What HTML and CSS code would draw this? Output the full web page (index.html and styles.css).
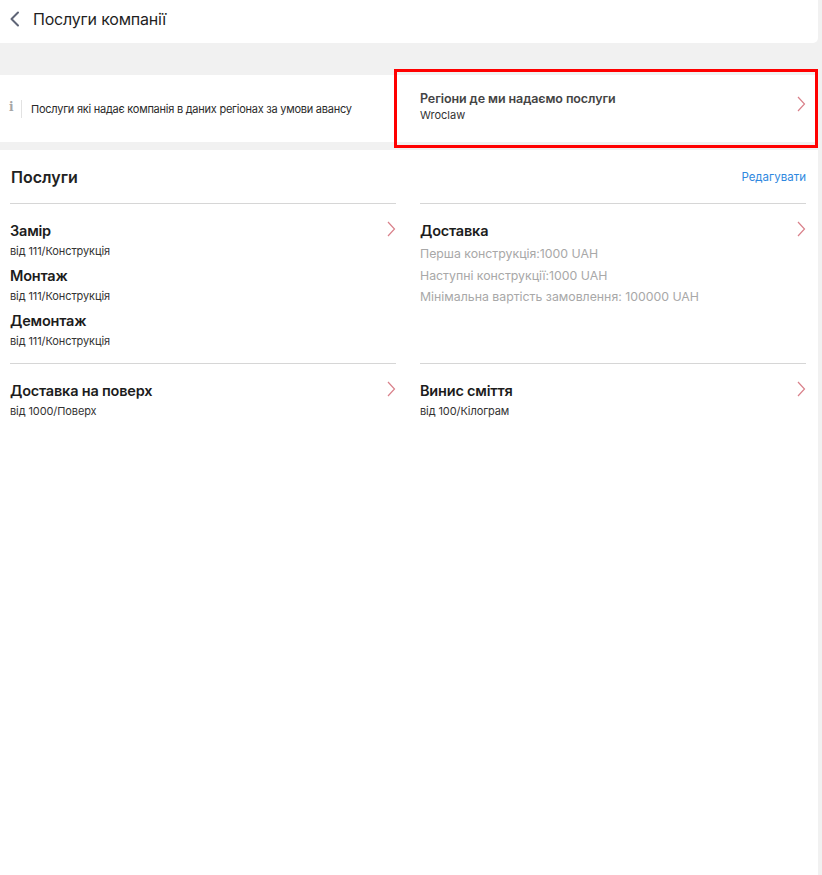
FILE: index.html
```html
<!DOCTYPE html>
<html lang="uk">
<head>
<meta charset="utf-8">
<title>Послуги компанії</title>
<link rel="stylesheet" href="styles.css">
</head>
<body>
<div class="page">
  <header class="topbar">
    <svg class="back" width="12" height="16" viewBox="0 0 12 16"><path d="M9 1.5 L2.5 8 L9 14.5" fill="none" stroke="#5f6577" stroke-width="2" stroke-linecap="round" stroke-linejoin="round"/></svg>
    <h1 class="title">Послуги компанії</h1>
  </header>

  <div class="gap"></div>

  <section class="inforow">
    <div class="info">
      <span class="info-i">i</span>
      <span class="info-sep"></span>
      <span class="info-text">Послуги які надає компанія в даних регіонах за умови авансу</span>
    </div>
    <div class="regions">
      <div class="regions-body">
        <div class="regions-title">Регіони де ми надаємо послуги</div>
        <div class="regions-sub">Wroclaw</div>
      </div>
      <svg class="chev" width="10" height="16" viewBox="0 0 10 16"><path d="M2 1 L8.5 8 L2 15" fill="none" stroke="#d9808a" stroke-width="1.2"/></svg>
    </div>
  </section>

  <main class="services">
    <div class="services-head">
      <h2 class="services-title">Послуги</h2>
      <a class="edit">Редагувати</a>
    </div>
    <div class="grid">
      <div class="cell">
        <div class="cell-body">
          <div class="item"><div class="item-title">Замір</div><div class="item-sub">від 111/Конструкція</div></div>
          <div class="item"><div class="item-title">Монтаж</div><div class="item-sub">від 111/Конструкція</div></div>
          <div class="item"><div class="item-title">Демонтаж</div><div class="item-sub">від 111/Конструкція</div></div>
        </div>
        <svg class="chev" width="10" height="16" viewBox="0 0 10 16"><path d="M2 1 L8.5 8 L2 15" fill="none" stroke="#d9808a" stroke-width="1.2"/></svg>
      </div>
      <div class="cell">
        <div class="cell-body">
          <div class="item-title">Доставка</div>
          <div class="gray-line first">Перша конструкція:1000 UAH</div>
          <div class="gray-line">Наступні конструкції:1000 UAH</div>
          <div class="gray-line">Мінімальна вартість замовлення: 100000 UAH</div>
        </div>
        <svg class="chev" width="10" height="16" viewBox="0 0 10 16"><path d="M2 1 L8.5 8 L2 15" fill="none" stroke="#d9808a" stroke-width="1.2"/></svg>
      </div>
      <div class="cell second">
        <div class="cell-body">
          <div class="item"><div class="item-title">Доставка на поверх</div><div class="item-sub">від 1000/Поверх</div></div>
        </div>
        <svg class="chev" width="10" height="16" viewBox="0 0 10 16"><path d="M2 1 L8.5 8 L2 15" fill="none" stroke="#d9808a" stroke-width="1.2"/></svg>
      </div>
      <div class="cell second">
        <div class="cell-body">
          <div class="item"><div class="item-title">Винис сміття</div><div class="item-sub">від 100/Кілограм</div></div>
        </div>
        <svg class="chev" width="10" height="16" viewBox="0 0 10 16"><path d="M2 1 L8.5 8 L2 15" fill="none" stroke="#d9808a" stroke-width="1.2"/></svg>
      </div>
    </div>
  </main>

  <div class="highlight"></div>
</div>
</body>
</html>
```
FILE: styles.css
```css
* { box-sizing: border-box; }
html, body { margin: 0; padding: 0; }
body {
  background: #f1f1f1;
  font-family: Inter, "Noto Sans", sans-serif;
  color: #222;
  height: 875px;
  overflow: hidden;
}
.page {
  position: relative;
  width: 818px;
  min-height: 875px;
  display: flex;
  flex-direction: column;
}
.topbar {
  height: 43px;
  background: #fff;
  border-bottom-right-radius: 5px;
  display: flex;
  align-items: center;
  padding-left: 9px;
  gap: 12px;
}
.back { margin-top: -5px; }
.title {
  margin: 0 0 5px 0;
  font-size: 16px;
  font-weight: 400;
  color: #1f1f1f;
  letter-spacing: -0.2px;
}
.gap { height: 32px; }
.inforow {
  height: 67px;
  background: #fff;
  display: flex;
  margin-bottom: 8px;
}
.info {
  width: 396px;
  display: flex;
  align-items: center;
  padding-left: 9px;
}
.info-i {
  font-family: "DejaVu Serif", serif;
  font-size: 12px;
  font-weight: 700;
  color: #a5a5a5;
  width: 7px;
  margin-top: -3px;
}
.info-sep {
  width: 1px;
  height: 18px;
  background: #e2e2e2;
  margin: 0 9px 0 5px;
}
.info-text {
  font-size: 11px;
  color: #2a2a2a;
  letter-spacing: -0.25px;
}
.regions {
  flex: 1;
  display: flex;
  align-items: center;
  padding: 0 12px 0 24px;
}
.regions-body { flex: 1; margin-top: -3px; }
.regions-title {
  font-size: 12.5px;
  font-weight: 600;
  color: #444;
  line-height: 16px;
  letter-spacing: -0.1px;
}
.regions-sub {
  font-size: 11px;
  color: #333;
  line-height: 15px;
  margin-top: 1px;
}
.regions .chev { margin-top: -9px; }
.services {
  flex: 1;
  background: #fff;
  padding: 0 12px 0 10px;
}
.services-head {
  height: 53px;
  display: flex;
  align-items: center;
  justify-content: space-between;
}
.services-title {
  margin: 0 0 0 1px;
  font-size: 16px;
  font-weight: 600;
  color: #222;
}
.edit {
  font-size: 11.5px;
  color: #2f88e0;
  cursor: pointer;
}
.grid {
  display: grid;
  grid-template-columns: 1fr 1fr;
  column-gap: 24px;
}
.cell {
  border-top: 1px solid #d6d6d6;
  display: flex;
  align-items: flex-start;
  padding-top: 17px;
  min-height: 160px;
}
.cell.second { min-height: 0; }
.cell-body { flex: 1; }
.cell .chev { margin-top: 0; flex: none; }
.item { margin-bottom: 7px; }
.item-title {
  font-size: 14.5px;
  font-weight: 600;
  color: #1c1c1c;
  line-height: 20px;
  letter-spacing: -0.2px;
}
.item-sub {
  font-size: 11px;
  color: #333;
  line-height: 16px;
  margin-top: 2px;
  letter-spacing: -0.1px;
}
.gray-line {
  font-size: 12.3px;
  color: #a8a8a8;
  line-height: 21.5px;
}
.gray-line.first { margin-top: 2px; }
.highlight {
  position: absolute;
  left: 394px;
  top: 69px;
  width: 424px;
  height: 79px;
  border: 3px solid #ff0000;
  pointer-events: none;
}
```
